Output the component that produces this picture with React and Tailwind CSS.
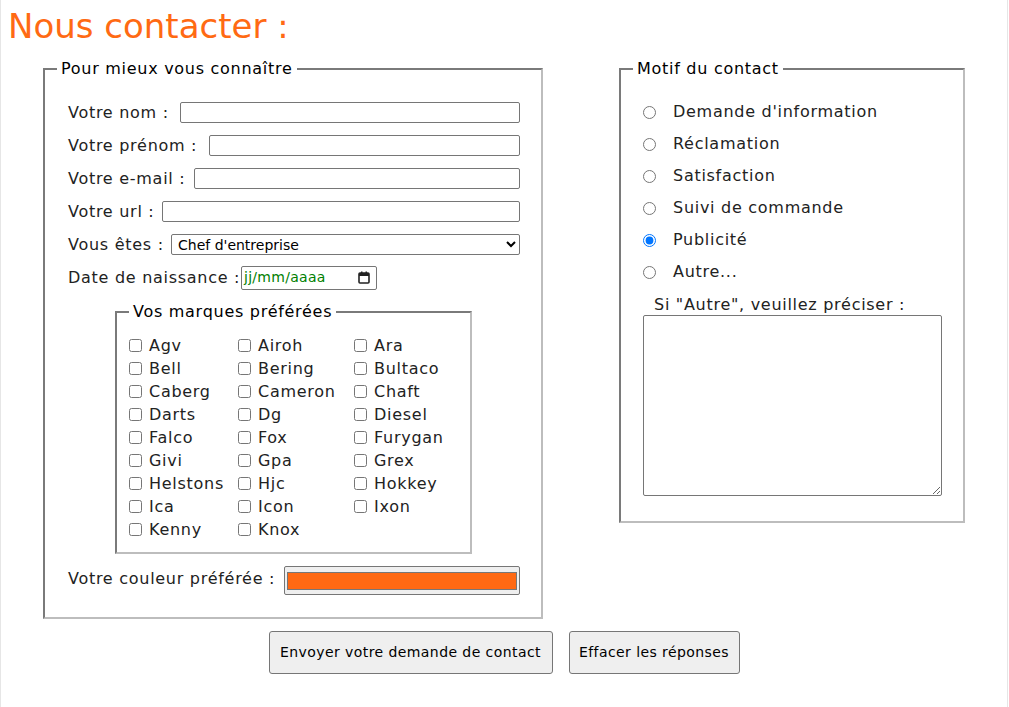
import React from 'react';

const brands = [
  ['Agv', 'Airoh', 'Ara'],
  ['Bell', 'Bering', 'Bultaco'],
  ['Caberg', 'Cameron', 'Chaft'],
  ['Darts', 'Dg', 'Diesel'],
  ['Falco', 'Fox', 'Furygan'],
  ['Givi', 'Gpa', 'Grex'],
  ['Helstons', 'Hjc', 'Hokkey'],
  ['Ica', 'Icon', 'Ixon'],
  ['Kenny', 'Knox', null],
];

const motifs = ['Demande d\'information', 'Réclamation', 'Satisfaction', 'Suivi de commande', 'Publicité', 'Autre...'];

const TextRow = ({ label, labelWidth, type = 'text' }) => (
  <div className="flex h-[33px] items-center">
    <label className="shrink-0" style={{ width: labelWidth }}>{label}</label>
    <input type={type} className="h-[21px] flex-1 rounded-[2px] border border-[#767676] bg-white px-1" />
  </div>
);

const App = () => {
  return (
    <div className="min-h-screen w-[1008px] border-x border-[#e6e6e6] bg-white px-[7px] text-[16px] tracking-[0.045em] text-[#222]" style={{ fontFamily: '"DejaVu Sans", sans-serif' }}>
      <h1 className="h-[50px] pt-[2px] text-[34px] leading-[48px] tracking-normal text-[#ff6a13]">Nous contacter :</h1>

      <div className="mt-[9px] flex items-start">
        <fieldset className="ml-[35px] w-[500px] border-2 px-[12px] pb-[22px] pt-[17px] [border-color:#7a7a7a_#bdbdbd_#bdbdbd_#7a7a7a]">
          <legend className="px-[4px] leading-[20px] text-black">Pour mieux vous connaître</legend>
          <div className="ml-[11px] w-[452px]">
            <TextRow label="Votre nom :" labelWidth={112} />
            <TextRow label="Votre prénom :" labelWidth={141} />
            <TextRow label="Votre e-mail :" labelWidth={126} type="email" />
            <TextRow label="Votre url :" labelWidth={94} type="url" />
            <div className="flex h-[33px] items-center">
              <label className="w-[103px] shrink-0">Vous êtes :</label>
              <select defaultValue="chef" className="h-[21px] flex-1 rounded-[2px] border border-[#767676] bg-white pl-[2px] text-[14px] tracking-normal text-black">
                <option value="chef">Chef d'entreprise</option>
                <option value="salarie">Salarié</option>
                <option value="etudiant">Étudiant</option>
              </select>
            </div>
            <div className="flex h-[33px] items-center">
              <label className="w-[173px] shrink-0">Date de naissance :</label>
              <div className="flex h-[24px] w-[136px] items-center justify-between rounded-[2px] border border-[#767676] bg-white pl-[2px] pr-[6px] text-[14px] tracking-[0.02em] text-[#008000]">
                <span>jj/mm/aaaa</span>
                <svg width="12" height="13" viewBox="0 0 12 13" className="text-[#222]">
                  <rect x="1" y="2" width="10" height="10" rx="1" fill="none" stroke="currentColor" strokeWidth="1.6" />
                  <rect x="1" y="2" width="10" height="3" fill="currentColor" />
                  <rect x="3" y="0.5" width="1.5" height="2.5" fill="currentColor" />
                  <rect x="7.5" y="0.5" width="1.5" height="2.5" fill="currentColor" />
                </svg>
              </div>
            </div>

            <fieldset className="ml-[47px] mt-[8px] w-[357px] border-2 px-[12px] pb-[11px] pt-[12px] [border-color:#7a7a7a_#bdbdbd_#bdbdbd_#7a7a7a]">
              <legend className="px-[4px] leading-[20px] text-black">Vos marques préférées</legend>
              <div className="grid grid-cols-[109px_116px_auto]">
                {brands.flat().map((b, i) =>
                  b ? (
                    <label key={i} className="flex h-[23px] items-center gap-[7px]">
                      <input type="checkbox" className="m-0 h-[13px] w-[13px]" />
                      <span>{b}</span>
                    </label>
                  ) : (
                    <span key={i} />
                  )
                )}
              </div>
            </fieldset>

            <div className="mt-[12px] flex h-[29px] items-center">
              <label className="w-[216px] shrink-0 pb-[4px]">Votre couleur préférée :</label>
              <div className="h-[29px] w-[236px] rounded-[2px] border border-[#767676] bg-[#efefef] px-[2px] pb-[4px] pt-[5px]">
                <div className="h-full w-full border border-[#777] bg-[#ff6913]" />
              </div>
            </div>
          </div>
        </fieldset>

        <fieldset className="ml-[76px] w-[346px] border-2 px-[12px] pb-[25px] pt-[17px] [border-color:#7a7a7a_#bdbdbd_#bdbdbd_#7a7a7a]">
          <legend className="px-[4px] leading-[20px] text-black">Motif du contact</legend>
          <div className="pl-[10px]">
            {motifs.map((m, i) => (
              <label key={m} className="flex h-[32px] items-center gap-[17px]">
                <input type="radio" name="motif" defaultChecked={i === 4} className="m-0 h-[13px] w-[13px]" />
                <span>{m}</span>
              </label>
            ))}
          </div>
          <div className="mt-[7px] pl-[21px] leading-[20px]">Si "Autre", veuillez préciser :</div>
          <textarea className="ml-[10px] block h-[181px] w-[299px] rounded-[2px] border border-[#767676] bg-white p-1" />
        </fieldset>
      </div>

      <div className="mt-[12px] flex justify-center gap-[16px]">
        <button className="h-[43px] w-[284px] rounded-[3px] border border-[#767676] bg-[#efefef] text-[14px] tracking-[0.03em] text-black">Envoyer votre demande de contact</button>
        <button className="h-[43px] w-[171px] rounded-[3px] border border-[#767676] bg-[#efefef] text-[14px] tracking-[0.03em] text-black">Effacer les réponses</button>
      </div>
    </div>
  );
};

export default App;
